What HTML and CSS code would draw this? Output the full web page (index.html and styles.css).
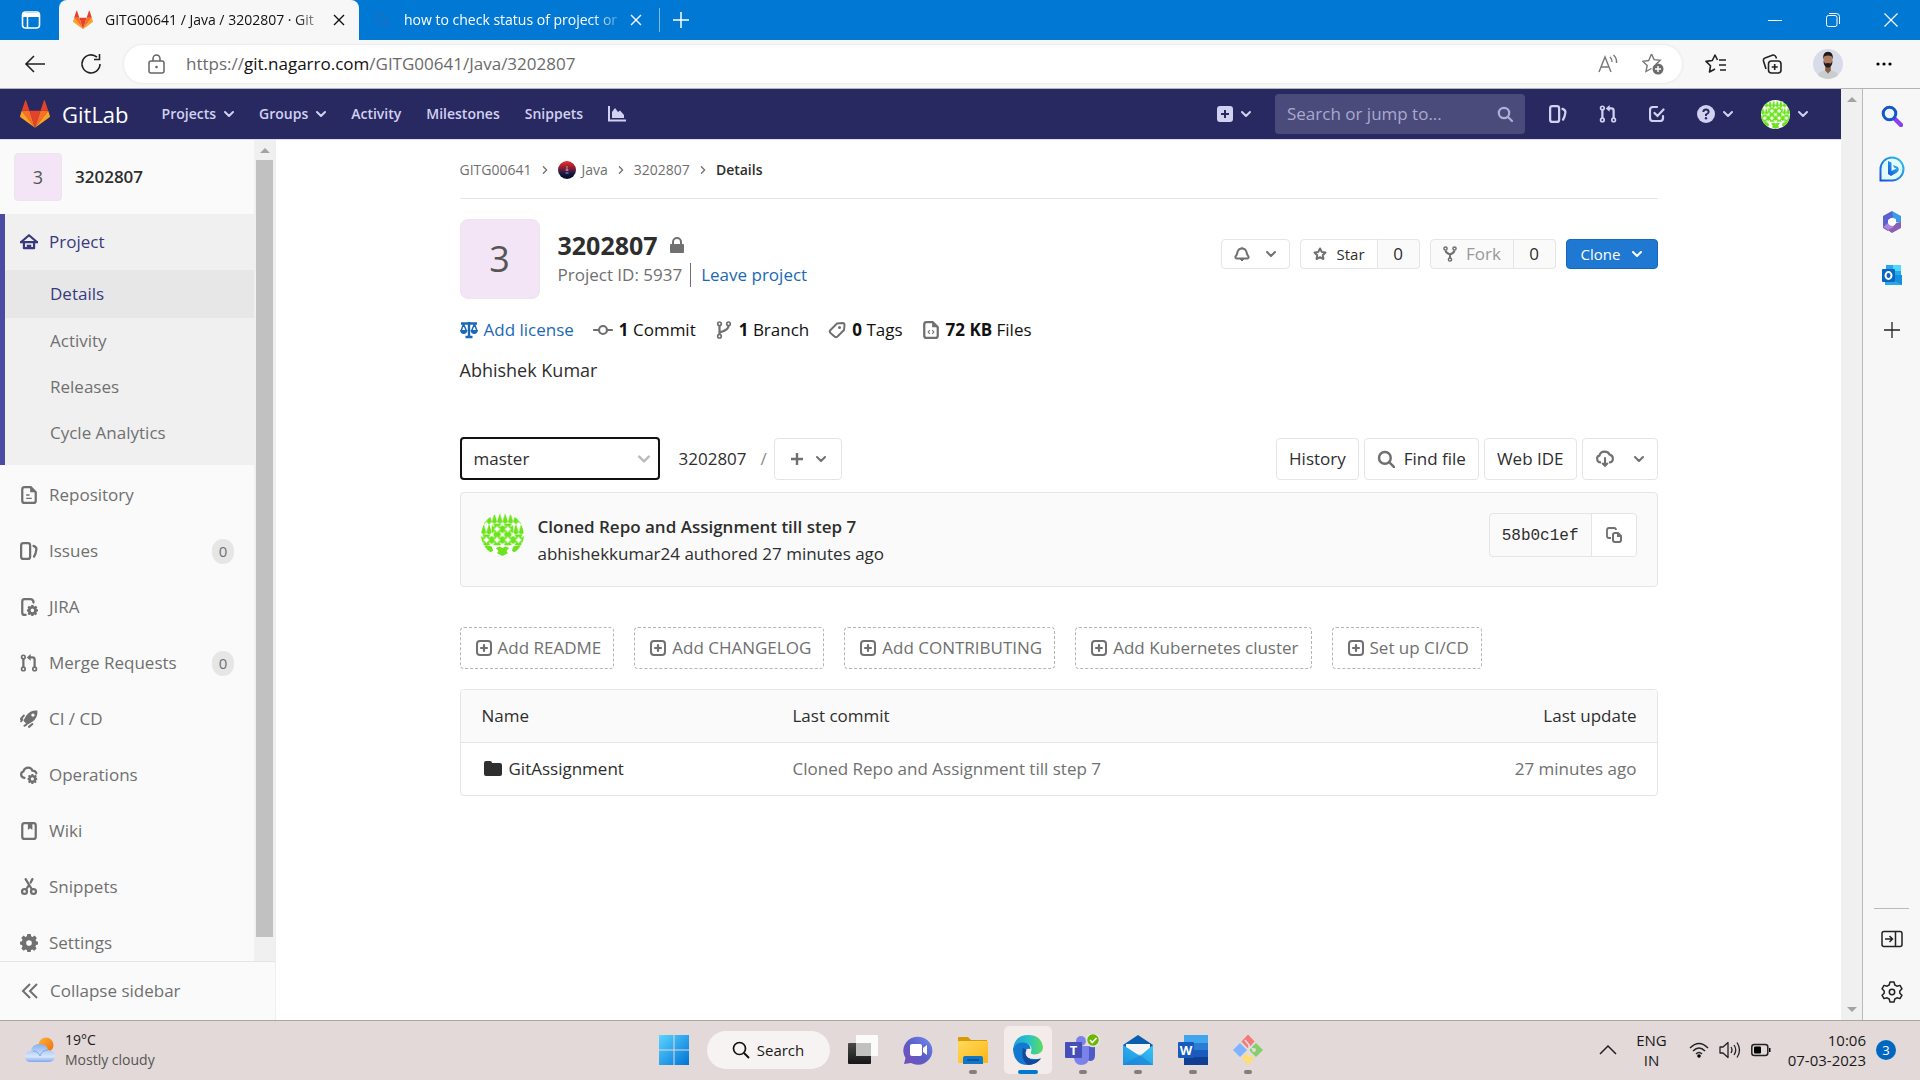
FILE: index.html
```html
<!DOCTYPE html>
<html lang="en">
<head>
<meta charset="utf-8">
<title>GITG00641 / Java / 3202807 · GitLab</title>
<link rel="stylesheet" href="styles.css">
</head>
<body>
<svg class="defs" aria-hidden="true">
  <defs>
    <linearGradient id="gWin" x1="0" y1="0" x2="1" y2="1"><stop offset="0" stop-color="#5bd5ff"/><stop offset="1" stop-color="#0072d6"/></linearGradient>
    <linearGradient id="gEdge" x1="0" y1="0" x2="1" y2="0"><stop offset="0" stop-color="#1d9fe0"/><stop offset=".5" stop-color="#27c2c9"/><stop offset="1" stop-color="#5fdc5a"/></linearGradient>
    <linearGradient id="gChat" x1="1" y1="0" x2="0" y2="1"><stop offset="0" stop-color="#6f8df0"/><stop offset=".5" stop-color="#5b5fc7"/><stop offset="1" stop-color="#7a4ab8"/></linearGradient>
    <linearGradient id="gFolder" x1="0" y1="0" x2="1" y2="1"><stop offset="0" stop-color="#ffd95c"/><stop offset="1" stop-color="#fcb614"/></linearGradient>
    <linearGradient id="gMail" x1="0" y1="1" x2="1" y2="0"><stop offset="0" stop-color="#1d8fe0"/><stop offset="1" stop-color="#37c5f5"/></linearGradient>
    <linearGradient id="gCloud" x1="0" y1="0" x2="0" y2="1"><stop offset="0" stop-color="#86b0ee"/><stop offset=".7" stop-color="#d7e6fb"/><stop offset="1" stop-color="#7fa6ee"/></linearGradient>
    <linearGradient id="gSun" x1="0" y1="0" x2="1" y2="1"><stop offset="0" stop-color="#fbb33a"/><stop offset="1" stop-color="#f26c0d"/></linearGradient>
    <linearGradient id="gBing" x1="0" y1="1" x2="1" y2="0"><stop offset="0" stop-color="#1b4fd8"/><stop offset="1" stop-color="#2fc4f0"/></linearGradient>
    <linearGradient id="gJava" x1="0" y1="0" x2="0" y2="1"><stop offset="0" stop-color="#e8302a"/><stop offset=".4" stop-color="#8a1c34"/><stop offset=".7" stop-color="#111a45"/><stop offset="1" stop-color="#05081e"/></linearGradient>
    <linearGradient id="gTask" x1="0" y1="0" x2="0" y2="1"><stop offset="0" stop-color="#4a4a4a"/><stop offset="1" stop-color="#161616"/></linearGradient>
    <clipPath id="round"><circle cx="16" cy="16" r="16"/></clipPath>
    <pattern id="tri" width="4" height="8" patternUnits="userSpaceOnUse"><path d="M2 0 4 6.500 2.500 8h-1L0 6.500z" fill="#6be41c"/></pattern>
    <pattern id="dia" width="8" height="8" patternUnits="userSpaceOnUse"><path d="M1 0h6L5.500 2.500 8 1v6L5.500 5.500 7 8H1l1.500-2.500L0 7V1l2.500 1.500z" fill="#6be41c"/><path d="m4 1.500 1 1.500 1.500 1L5 5 4 6.500 3 5 1.500 4 3 3z" fill="#fff"/></pattern>
  </defs>
  <symbol id="down" viewBox="0 0 10 10"><path d="m1 3 4 4 4-4" fill="none" stroke="currentColor" stroke-width="2" stroke-linecap="round" stroke-linejoin="round"/></symbol>
  <symbol id="right" viewBox="0 0 10 10"><path d="m3 1 4 4-4 4" fill="none" stroke="currentColor" stroke-width="1.600" stroke-linecap="round" stroke-linejoin="round"/></symbol>
  <symbol id="close" viewBox="0 0 12 12"><path d="m1 1 10 10M11 1 1 11" stroke="currentColor" stroke-width="1.400"/></symbol>
  <symbol id="tanuki" viewBox="0 0 36 33"><path fill="#e24329" d="M18 33 24.600 12.600H11.400z"/><path fill="#fc6d26" d="M18 33 11.400 12.600H2.100zM18 33l6.600-20.400h9.300z"/><path fill="#fca326" d="M2.100 12.600.1 18.800c-.2.600 0 1.200.5 1.500L18 33zM33.900 12.600l2 6.200c.2.600 0 1.200-.5 1.500L18 33z"/><path fill="#e24329" d="M2.100 12.600h9.300L7.400.5c-.2-.6-1.100-.6-1.300 0zM33.900 12.600h-9.300L28.600.5c.2-.6 1.100-.6 1.300 0z"/></symbol>
  <symbol id="ident" viewBox="0 0 32 32"><g clip-path="url(#round)"><path fill="#fff" d="M0 0h32v32H0z"/><path fill="url(#tri)" d="M0 0h32v8H0zM0 8h8v8H0zM24 8h8v8h-8z"/><path fill="url(#dia)" d="M8 8h16v16H8zM0 16h8v8H0zM24 16h8v8h-8z"/><path fill="#6be41c" d="m1 25 3-1 4 1 1 3-3 2zM31 25l-3-1-4 1-1 3 3 2zM11 26l3-1 2 1 2-1 3 1-2 2 1 2-4 2-4-2 1-2z"/></g></symbol>
  <symbol id="plusbox" viewBox="0 0 16 16"><rect x="1" y="1" width="14" height="14" rx="3" fill="none" stroke="currentColor" stroke-width="2"/><path d="M8 5v6M5 8h6" stroke="currentColor" stroke-width="2.200" stroke-linecap="round"/></symbol>
  <symbol id="mag" viewBox="0 0 16 16"><circle cx="7" cy="7" r="5.200" fill="none" stroke="currentColor" stroke-width="2.200"/><path d="m11 11 4 4" stroke="currentColor" stroke-width="2.200" stroke-linecap="round"/></symbol>
  <symbol id="issues" viewBox="0 0 16 16"><rect x="1" y="1" width="8" height="14" rx="2" fill="none" stroke="currentColor" stroke-width="2"/><path d="M12 3.500q3 1 2.500 3.500-.3 3-2 6" fill="none" stroke="currentColor" stroke-width="2" stroke-linecap="round"/></symbol>
  <symbol id="mr" viewBox="0 0 16 16"><g fill="none" stroke="currentColor" stroke-width="1.500"><circle cx="3" cy="2.700" r="1.600"/><circle cx="3" cy="13.300" r="1.600"/><circle cx="13" cy="13.300" r="1.600"/><path d="M3 4.500v7M13 11.500V5q0-2-2-2H8.500" stroke-width="2"/></g><path d="M9.500 0v6L6 3z" fill="currentColor"/></symbol>
  <symbol id="gear" viewBox="0 0 16 16"><path fill="currentColor" fill-rule="evenodd" d="M6.500 0h3l.4 2 1.300.6L13 1.400 15 3.500l-1.100 1.700.5 1.300 1.600.3v2.600l-1.700.4-.6 1.300 1 1.700-2 2-1.600-1.100-1.300.5L9.500 16h-3l-.4-1.800-1.300-.5-1.600 1.100-2-2 1-1.700-.5-1.300L0 9.400V6.800l1.700-.3.500-1.300L1.100 3.500l2-2.100 1.700 1.200L6.100 2zM8 5.500a2.500 2.500 0 1 0 0 5 2.500 2.500 0 0 0 0-5z"/></symbol>
  <symbol id="file" viewBox="0 0 16 16"><path d="M9.500 1H4q-2 0-2 2v10q0 2 2 2h8q2 0 2-2V5.500z" fill="none" stroke="currentColor" stroke-width="2" stroke-linejoin="round"/><path d="M9 1v4.500h5" fill="currentColor"/><path d="M5.500 8h3M5.500 11h5" stroke="currentColor" stroke-width="1.200"/></symbol>
  <symbol id="cloudgear" viewBox="0 0 16 16"><path d="M4 10.500Q1 10 1 7.500q0-2 2-2.700Q4 1.500 7.500 1.500 10 1.500 11 4q3 0 3.500 2.500" fill="none" stroke="currentColor" stroke-width="2" stroke-linecap="round"/><use href="#gear" x="6.500" y="7" width="9" height="9"/></symbol>
  <symbol id="filegear" viewBox="0 0 16 16"><path d="M5 15H4q-2 0-2-2V3q0-2 2-2h5q3 0 3 3" fill="none" stroke="currentColor" stroke-width="2" stroke-linecap="round"/><use href="#gear" x="6" y="6" width="10" height="10"/></symbol>
  <symbol id="house" viewBox="0 0 16 16"><path d="M1 8 8 2l7 6" fill="none" stroke="currentColor" stroke-width="2" stroke-linecap="round" stroke-linejoin="round"/><path d="M3.500 8v5.500h9V8M0 8h16M6 11.500h4" fill="none" stroke="currentColor" stroke-width="2" stroke-linejoin="round"/></symbol>
  <symbol id="rocket" viewBox="0 0 16 16"><path fill="currentColor" fill-rule="evenodd" d="M15.500.5Q9 0 5.500 5L3 9.500 6.500 13 11 10.500Q16 7 15.500.5zM11.500 3a1.500 1.500 0 1 1 0 3 1.500 1.500 0 0 1 0-3z"/><path d="m.8 8 2.500-3M1 10l1-1.500M8 15l3-2.500M4 14l1.500-1" stroke="currentColor" stroke-width="1.800" stroke-linecap="round"/></symbol>
  <symbol id="wiki" viewBox="0 0 16 16"><rect x="2" y="1" width="12" height="14" rx="2" fill="none" stroke="currentColor" stroke-width="2"/><path d="M7 1h4v6L9 5.500 7 7z" fill="currentColor"/></symbol>
  <symbol id="scissors" viewBox="0 0 16 16"><g fill="none" stroke="currentColor" stroke-width="2"><circle cx="4" cy="12" r="2.200"/><circle cx="12" cy="12" r="2.200"/><path d="m5 1 5.500 9M11 1 9.500 4M7.500 7 5.500 10" stroke-linecap="round"/></g></symbol>
  <symbol id="fork" viewBox="0 0 16 16"><g fill="none" stroke="currentColor" stroke-width="1.500"><circle cx="3.500" cy="2.500" r="1.600"/><circle cx="12.500" cy="2.500" r="1.600"/><circle cx="8" cy="13.500" r="1.600"/><path d="M3.500 4.500Q4 7 8 8.500 12 7 12.500 4.500M8 8v4" stroke-width="2"/></g></symbol>
  <symbol id="branch" viewBox="0 0 16 16"><g fill="none" stroke="currentColor" stroke-width="1.500"><circle cx="4" cy="2.500" r="1.600"/><circle cx="12" cy="2.500" r="1.600"/><circle cx="4" cy="13.500" r="1.600"/><path d="M4 4.500v7M12 4.500Q12 8 4.500 10" stroke-width="2"/></g></symbol>
</svg>

<div class="tabs">
  <button class="iconbtn workspace" aria-label="Tab actions"><svg width="20" height="20" viewBox="0 0 20 20"><rect x="1.500" y="2" width="17" height="16" rx="3" fill="none" stroke="#fff" stroke-width="1.600"/><path d="M2 3h16v4H2z" fill="#fff"/><path d="M6.500 7v11" stroke="#fff" stroke-width="1.500"/></svg></button>
  <div class="tab active"><svg width="20" height="20"><use href="#tanuki"/></svg><span class="tabtext">GITG00641 / Java / 3202807 · Git</span><button class="x" aria-label="Close tab"><svg width="12" height="12"><use href="#close"/></svg></button></div>
  <div class="tab other"><svg width="14" height="14" color="#1a6fc4"><use href="#mag"/></svg><span class="tabtext">how to check status of project or</span><button class="x" aria-label="Close tab"><svg width="12" height="12"><use href="#close"/></svg></button></div>
  <button class="x newtab" aria-label="New tab"><svg width="18" height="18" viewBox="0 0 18 18"><path d="M9 1v16M1 9h16" stroke="#fff" stroke-width="1.500"/></svg></button>
  <div class="winctl">
    <button aria-label="Minimize"><svg width="14" height="14" viewBox="0 0 14 14"><path d="M0 7.500h14" stroke="#fff"/></svg></button>
    <button aria-label="Restore"><svg width="14" height="14" viewBox="0 0 14 14"><rect x=".5" y="2.500" width="10.500" height="11" rx="2" fill="none" stroke="#fff"/><path d="M3 .5h7.500q3 0 3 3V11" fill="none" stroke="#fff"/></svg></button>
    <button aria-label="Close"><svg width="14" height="14" viewBox="0 0 14 14"><path d="m.5.5 13 13M13.500.5l-13 13" stroke="#fff" stroke-width="1.200"/></svg></button>
  </div>
</div>

<div class="toolbar">
  <button class="iconbtn" aria-label="Back"><svg width="22" height="20" viewBox="0 0 22 20"><path d="M21 10H2M10 2 2 10l8 8" fill="none" stroke="#222" stroke-width="1.600"/></svg></button>
  <button class="iconbtn" aria-label="Refresh"><svg width="22" height="22" viewBox="0 0 22 22"><path d="M20 11a9 9 0 1 1-3-6.800M19.500 1v5.500H14" fill="none" stroke="#222" stroke-width="1.600"/></svg></button>
  <div class="address">
    <svg width="17" height="20" viewBox="0 0 17 20"><rect x="1" y="7" width="15" height="12" rx="2" fill="none" stroke="#666" stroke-width="1.500"/><path d="M5 7V4.500a3.500 3.500 0 0 1 7 0V7" fill="none" stroke="#666" stroke-width="1.500"/><circle cx="8.500" cy="13" r="1.300" fill="#666"/></svg>
    <span class="url">https://<b>git.nagarro.com</b>/GITG00641/Java/3202807</span>
    <svg width="20" height="20" viewBox="0 0 20 20"><path d="M1 18 7 3l6 15M3 13h8M12 3q2 2 2 5M15.500 1Q19 4 18.500 9" fill="none" stroke="#777" stroke-width="1.400"/></svg>
    <svg width="22" height="22" viewBox="0 0 22 22"><path d="m9.500 1 2.600 5.600 6.100.7-4.500 4.200M9.500 15.500 4 18.500l1.200-6-4.500-4.200 6-.8L9.500 1" fill="none" stroke="#777" stroke-width="1.400"/><circle cx="16" cy="16" r="5.500" fill="#6c6c6c"/><path d="M16 13v6M13 16h6" stroke="#fff" stroke-width="1.400"/></svg>
  </div>
  <button class="iconbtn" aria-label="Favorites"><svg width="22" height="20" viewBox="0 0 22 20"><path d="M14 6h7M14 11h7M15 16h6" stroke="#222" stroke-width="1.600"/><path d="M12.500 6 10 1 7.300 6.500 1 7.400l4.500 4.400L4.500 18l5.500-3" fill="none" stroke="#222" stroke-width="1.600" stroke-linejoin="round"/></svg></button>
  <button class="iconbtn" aria-label="Collections"><svg width="20" height="20" viewBox="0 0 20 20"><rect x="6.500" y="7" width="12.500" height="12" rx="3" fill="none" stroke="#222" stroke-width="1.600"/><path d="M12.700 10v6M9.700 13h6M4 15 1.500 7Q1 4.500 3 4l8-3q2-.3 3 2l.5 1.500" fill="none" stroke="#222" stroke-width="1.600"/></svg></button>
  <button class="iconbtn profile" aria-label="Profile"><svg width="30" height="30" viewBox="0 0 32 32"><g clip-path="url(#round)"><path fill="#d8dbe8" d="M0 0h32v32H0z"/><path fill="#c9cdcb" d="M4 32q1-8 8-9h8q7 1 8 9z"/><path fill="#8a5a42" d="M13 17h6v6l-3 3-3-3z"/><ellipse cx="16" cy="12" rx="4.800" ry="7" fill="#b07c62"/><path fill="#231c1c" d="M11 11Q10 3 16 3t5 8l-1-3Q16 6 12 8zM11.200 13q.3 6 4.800 7 4.500-1 4.800-7l-1.800 2.500q-3-1-6 0z"/></g></svg></button>
  <button class="iconbtn" aria-label="Settings and more"><svg width="18" height="6" viewBox="0 0 18 6"><circle cx="3" cy="3" r="1.600"/><circle cx="9" cy="3" r="1.600"/><circle cx="15" cy="3" r="1.600"/></svg></button>
</div>

<div class="window">
<div class="page">
  <header class="nav">
    <a class="brand" href="#"><svg width="30" height="28"><use href="#tanuki"/></svg><span>GitLab</span></a>
    <nav class="links">
      <a href="#">Projects <svg width="10" height="10"><use href="#down"/></svg></a>
      <a href="#">Groups <svg width="10" height="10"><use href="#down"/></svg></a>
      <a href="#">Activity</a><a href="#">Milestones</a><a href="#">Snippets</a>
      <a href="#" aria-label="Analytics"><svg width="18" height="16" viewBox="0 0 18 16"><path d="M1 0v14.500h17" fill="none" stroke="currentColor" stroke-width="2"/><path d="M4 12V6l3-4 3 4 2-1.500 4 4.500v3z" fill="currentColor"/></svg></a>
    </nav>
    <div class="navright">
      <a href="#" aria-label="New"><svg width="16" height="16" viewBox="0 0 16 16"><path fill="currentColor" fill-rule="evenodd" d="M3 0h10q3 0 3 3v10q0 3-3 3H3q-3 0-3-3V3q0-3 3-3zm4 4v3H4v2h3v3h2V9h3V7H9V4z"/></svg><svg width="10" height="10"><use href="#down"/></svg></a>
      <label class="search"><input type="text" placeholder="Search or jump to..." aria-label="Search or jump to"><svg width="16" height="16"><use href="#mag"/></svg></label>
      <a href="#" aria-label="Issues"><svg width="18" height="18"><use href="#issues"/></svg></a>
      <a href="#" aria-label="Merge requests"><svg width="18" height="18"><use href="#mr"/></svg></a>
      <a href="#" aria-label="Todos"><svg width="16" height="16" viewBox="0 0 16 16"><path d="M8 1H4Q1 1 1 4v8q0 3 3 3h7q3 0 3-3v-2M5.500 7l3 3 6-6.500" fill="none" stroke="currentColor" stroke-width="2.200" stroke-linecap="round"/></svg></a>
      <a class="help" href="#" aria-label="Help"><svg width="18" height="18" viewBox="0 0 18 18"><circle cx="9" cy="9" r="9" fill="currentColor"/><path d="M6.300 7Q6.500 4.500 9 4.500T11.700 7Q11.700 8.300 9 9.500V11" fill="none" stroke="#292961" stroke-width="1.900"/><circle cx="9" cy="13.300" r="1.200" fill="#292961"/></svg><svg width="10" height="10"><use href="#down"/></svg></a>
      <a class="user" href="#" aria-label="User menu"><svg width="29" height="29"><use href="#ident"/></svg><svg width="10" height="10"><use href="#down"/></svg></a>
    </div>
  </header>
  <div class="body">
    <aside class="side">
      <div class="scroller">
        <div class="menu">
          <a class="context" href="#"><span class="avatar small">3</span><strong>3202807</strong></a>
          <div class="section">
            <a class="item" href="#"><svg width="18" height="18"><use href="#house"/></svg>Project</a>
            <a class="sub on" href="#">Details</a><a class="sub" href="#">Activity</a><a class="sub" href="#">Releases</a><a class="sub" href="#">Cycle Analytics</a>
          </div>
          <a class="item" href="#"><svg width="18" height="18"><use href="#file"/></svg>Repository</a>
          <a class="item" href="#"><svg width="18" height="18"><use href="#issues"/></svg>Issues<span class="count">0</span></a>
          <a class="item" href="#"><svg width="18" height="18"><use href="#filegear"/></svg>JIRA</a>
          <a class="item" href="#"><svg width="18" height="18"><use href="#mr"/></svg>Merge Requests<span class="count">0</span></a>
          <a class="item" href="#"><svg width="18" height="18"><use href="#rocket"/></svg>CI / CD</a>
          <a class="item" href="#"><svg width="18" height="18"><use href="#cloudgear"/></svg>Operations</a>
          <a class="item" href="#"><svg width="18" height="18"><use href="#wiki"/></svg>Wiki</a>
          <a class="item" href="#"><svg width="18" height="18"><use href="#scissors"/></svg>Snippets</a>
          <a class="item" href="#"><svg width="18" height="18"><use href="#gear"/></svg>Settings</a>
        </div>
        <div class="bar"><i class="up"></i><i class="thumb"></i></div>
      </div>
      <button class="collapse"><svg width="18" height="18" viewBox="0 0 18 18"><path d="M9 2 2 9l7 7M16 2 9 9l7 7" fill="none" stroke="currentColor" stroke-width="2"/></svg>Collapse sidebar</button>
    </aside>
    <main>
      <div class="content">
        <nav class="crumbs"><a href="#">GITG00641</a><svg width="8" height="8"><use href="#right"/></svg><a href="#"><svg width="18" height="18" viewBox="0 0 18 18"><circle cx="9" cy="9" r="9" fill="url(#gJava)"/><path d="M7.500 12h3M9 5v5M7.500 9h3" stroke="#c9b6cf" stroke-width=".8"/></svg>Java</a><svg width="8" height="8"><use href="#right"/></svg><a href="#">3202807</a><svg width="8" height="8"><use href="#right"/></svg><strong>Details</strong></nav>
        <div class="home">
          <span class="avatar big">3</span>
          <div class="titles">
            <h1>3202807 <svg width="14" height="16" viewBox="0 0 14 16"><rect y="7" width="14" height="9" rx="1" fill="#707070"/><path d="M3 8V5a4 4 0 0 1 8 0v3" fill="none" stroke="#707070" stroke-width="2"/></svg></h1>
            <p><span class="pid">Project ID: 5937</span><a href="#">Leave project</a></p>
          </div>
          <div class="actions">
            <button class="btn bell" aria-label="Notifications"><svg width="16" height="16" viewBox="0 0 16 16"><path d="M8 2.500q3.500 0 4.500 3.500.5 3 2 4.500.5 2-1.500 2H3q-2 0-1.500-2Q3 9 3.500 6 4.500 2.500 8 2.500z" fill="none" stroke="currentColor" stroke-width="2" stroke-linejoin="round"/><path d="M8 .8v2M6 13h4l-2 2z" fill="currentColor" stroke="currentColor"/></svg><svg width="10" height="10"><use href="#down"/></svg></button>
            <div class="pair"><button class="btn"><svg width="16" height="16" viewBox="0 0 16 16"><path d="m8 2.500 1.700 3.400 3.800.6-2.700 2.700.6 3.800L8 11.200 4.600 13l.6-3.800L2.500 6.500l3.800-.6z" fill="none" stroke="currentColor" stroke-width="2" stroke-linejoin="round"/></svg>Star</button><a class="num" href="#">0</a></div>
            <div class="pair off"><button class="btn" disabled><svg width="16" height="16"><use href="#fork"/></svg>Fork</button><a class="num" href="#">0</a></div>
            <button class="btn clone">Clone<svg width="10" height="10"><use href="#down"/></svg></button>
          </div>
        </div>
        <div class="stats">
          <a class="blue" href="#"><svg width="18" height="18" viewBox="0 0 18 18"><path d="M1 2.500h16M9 1v14M5.500 16h7" stroke="currentColor" stroke-width="2.400"/><path d="M3.500 3 1 10M3.500 3 6.500 10M14.500 3l-3 7M14.500 3 17 10" stroke="currentColor" stroke-width="1.500"/><path d="M0 9h7.500q-.5 4-3.800 4T0 9zM10.500 9H18q-.5 4-3.800 4t-3.700-4z" fill="currentColor"/></svg>Add license</a>
          <a href="#"><svg width="20" height="18" viewBox="0 0 20 18"><circle cx="10" cy="9" r="4" fill="none" stroke="currentColor" stroke-width="2.200"/><path d="M1 9h5M14 9h5" stroke="currentColor" stroke-width="2.200" stroke-linecap="round"/></svg><span><b>1</b> Commit</span></a>
          <a href="#"><svg width="18" height="18"><use href="#branch"/></svg><span><b>1</b> Branch</span></a>
          <a href="#"><svg width="18" height="18" viewBox="0 0 18 18"><path d="m9 2.500 5.500-.5q2 0 2 2l-.5 5-6.500 6.500q-1.500 1.300-3 0L2.500 12q-1.500-1.500 0-3z" fill="none" stroke="currentColor" stroke-width="2"/><circle cx="11.500" cy="6.500" r="1.500" fill="currentColor"/></svg><span><b>0</b> Tags</span></a>
          <a href="#"><svg width="18" height="18" viewBox="0 0 16 16"><path d="M9.500 1H4q-2 0-2 2v10q0 2 2 2h8q2 0 2-2V5.500z" fill="none" stroke="currentColor" stroke-width="2"/><path d="M9 1v4.500h5" fill="currentColor"/><path d="M7 8 5.500 9.800 7 11.500M9 8l1.500 1.800L9 11.500" fill="none" stroke="currentColor"/></svg><span><b>72 KB</b> Files</span></a>
        </div>
        <p class="desc">Abhishek Kumar</p>
        <div class="refs">
          <label class="ref"><select aria-label="Branch"><option>master</option></select><svg width="12" height="12"><use href="#down"/></svg></label>
          <a class="path" href="#">3202807</a><span class="slash">/</span>
          <button class="btn tall add" aria-label="Add to tree"><svg width="14" height="14" viewBox="0 0 14 14"><path d="M7 1v12M1 7h12" stroke="currentColor" stroke-width="2.400"/></svg><svg width="10" height="10"><use href="#down"/></svg></button>
          <div class="tree">
            <button class="btn tall">History</button>
            <button class="btn tall find"><svg width="18" height="18"><use href="#mag"/></svg>Find file</button>
            <button class="btn tall">Web IDE</button>
            <button class="btn tall dl" aria-label="Download"><svg width="18" height="18" viewBox="0 0 16 16"><path d="M4.500 11Q1 11 1 7.500 1 5.500 3 5q1-3.500 4.500-3.500T12 4q3 .8 3 3.700Q15 11 11.500 11M8 6.500V14M5.500 11.500 8 14l2.500-2.500" fill="none" stroke="currentColor" stroke-width="1.900"/></svg><svg width="10" height="10"><use href="#down"/></svg></button>
          </div>
        </div>
        <div class="commit">
          <svg width="43" height="43"><use href="#ident"/></svg>
          <div class="ctext"><a href="#"><strong>Cloned Repo and Assignment till step 7</strong></a><span>abhishekkumar24 authored 27 minutes ago</span></div>
          <div class="sha"><span>58b0c1ef</span><button aria-label="Copy commit SHA"><svg width="16" height="16" viewBox="0 0 16 16"><path d="M5 11H3q-2 0-2-2V3q0-2 2-2h5q2 0 2 2" fill="none" stroke="currentColor" stroke-width="1.800"/><path d="M12 6H9Q7 6 7 8v5q0 2 2 2h4q2 0 2-2V9z" fill="none" stroke="currentColor" stroke-width="2"/><path d="M11 6v4h4" fill="currentColor"/></svg></button></div>
        </div>
        <div class="suggest">
          <a href="#"><svg width="16" height="16"><use href="#plusbox"/></svg>Add README</a>
          <a href="#"><svg width="16" height="16"><use href="#plusbox"/></svg>Add CHANGELOG</a>
          <a href="#"><svg width="16" height="16"><use href="#plusbox"/></svg>Add CONTRIBUTING</a>
          <a href="#"><svg width="16" height="16"><use href="#plusbox"/></svg>Add Kubernetes cluster</a>
          <a href="#"><svg width="16" height="16"><use href="#plusbox"/></svg>Set up CI/CD</a>
        </div>
        <div class="files">
          <table>
            <thead><tr><th class="name">Name</th><th>Last commit</th><th class="end">Last update</th></tr></thead>
            <tbody><tr><td><a class="folder" href="#"><svg width="18" height="16" viewBox="0 0 18 16"><path d="M0 2Q0 0 2 0h4q2 0 2 2h8q2 0 2 2v9q0 2-2 2H2q-2 0-2-2z" fill="#2e2e2e"/></svg>GitAssignment</a></td><td class="dim">Cloned Repo and Assignment till step 7</td><td class="dim end">27 minutes ago</td></tr></tbody>
          </table>
        </div>
      </div>
    </main>
  </div>
</div>
<div class="bar"><i class="up"></i><i class="dn"></i></div>
<aside class="edge">
  <button aria-label="Search"><svg width="22" height="22" viewBox="0 0 22 22"><path d="m14 14 6 6" stroke="#8a3ff0" stroke-width="4.500" stroke-linecap="round"/><circle cx="8.500" cy="8.500" r="6.300" fill="#eef6ff" stroke="#1456cc" stroke-width="3"/></svg></button>
  <button aria-label="Bing"><svg width="26" height="26" viewBox="0 0 26 26"><path d="M1.500 24.500V13A11.500 11.500 0 1 1 13 24.500z" fill="#e2fbff" stroke="url(#gBing)" stroke-width="2"/><path d="m9 5 3.500 1.500V15l5-2.500-2.500-1L14 9l5 2q2 3-1 5.500L12 20l-3-2z" fill="url(#gBing)"/></svg></button>
  <button aria-label="Microsoft 365"><svg width="22" height="24" viewBox="0 0 22 24"><path d="m11 1 9 5v7l-5-1V9L8 7z" fill="#3b9be8"/><path d="M11 1 2 6v12l5 3V10l5-3z" fill="#5b62cf"/><path d="m2 17 9 6 9-5V12l-5 1-5 5z" fill="#8a5fb4"/><path d="m2 17 5 3 6-3-6-4z" fill="#b184dd"/><circle cx="11" cy="12" r="3.800" fill="#fff"/></svg></button>
  <button aria-label="Outlook"><svg width="22" height="22" viewBox="0 0 22 22"><rect x="5" y="1" width="15" height="13" fill="#28a8ea"/><path d="M12 1h8v6h-8z" fill="#50d9ff"/><path d="M4 11h17v10H4z" fill="#1490df"/><path d="m4 11 17 10H4z" fill="#28a8ea"/><rect x="1" y="5" width="13" height="13" rx="1" fill="#0a64c4"/><ellipse cx="7.500" cy="11.500" rx="3" ry="3.400" fill="none" stroke="#fff" stroke-width="2"/></svg></button>
  <button class="more" aria-label="Add"><svg width="16" height="16" viewBox="0 0 16 16"><path d="M8 0v16M0 8h16" stroke="#222" stroke-width="1.300"/></svg></button>
  <hr>
  <button aria-label="Hide sidebar"><svg width="22" height="18" viewBox="0 0 22 18"><rect x="1" y="1.500" width="20" height="15" rx="2" fill="none" stroke="#222" stroke-width="1.500"/><path d="M14.500 2v14M4 9h7M8.500 6l3 3-3 3" fill="none" stroke="#222" stroke-width="1.500"/></svg></button>
  <button aria-label="Settings"><svg width="22" height="22" viewBox="0 0 22 22"><path d="M9 1h4l.8 3 2.200 1.200 3-.8 2 3.400L18.800 10v2.200l2.200 2-2 3.400-3-.8-2.200 1.200L13 21H9l-.8-3L6 16.800l-3 .8-2-3.400 2.200-2V10L1 7.800l2-3.400 3 .8L8.200 4z" fill="none" stroke="#222" stroke-width="1.500" stroke-linejoin="round"/><circle cx="11" cy="11" r="2.700" fill="none" stroke="#222" stroke-width="1.500"/></svg></button>
</aside>
</div>

<footer class="taskbar">
  <div class="weather"><svg width="30" height="26" viewBox="0 0 30 26"><circle cx="21" cy="8" r="7.500" fill="url(#gSun)"/><path d="M6 25q-6 0-6-5.500Q0 14 6 14q1-7 8.500-7t8.500 6q7 .5 7 6t-6 6z" fill="url(#gCloud)"/><path d="M8 14q5 0 7 5 2-6 8-6" fill="none" stroke="#5e86da" stroke-opacity=".6"/></svg><div><div>19°C</div><div class="soft">Mostly cloudy</div></div></div>
  <div class="apps">
    <button aria-label="Start"><svg width="30" height="30" viewBox="0 0 30 30"><path d="M0 0h14.500v14.500H0zM15.500 0H30v14.500H15.500zM0 15.500h14.500V30H0zM15.500 15.500H30V30H15.500z" fill="url(#gWin)"/></svg></button>
    <button class="tsearch"><svg width="18" height="18" viewBox="0 0 18 18"><circle cx="7.500" cy="7.500" r="6" fill="none" stroke="#111" stroke-width="1.700"/><path d="m12 12 5 5" stroke="#111" stroke-width="2"/></svg>Search</button>
    <button aria-label="Task view"><svg width="30" height="30" viewBox="0 0 30 30"><rect y="8" width="23" height="21" rx="1" fill="url(#gTask)"/><rect x="8" width="22" height="21" rx="1" fill="#fbfbfb"/><path d="M8 8h15v13H8z" fill="#c3c1c0"/></svg></button>
    <button aria-label="Chat"><svg width="30" height="30" viewBox="0 0 30 30"><path d="M1 29 2.500 23A14.500 14 0 1 1 8 28z" fill="url(#gChat)"/><rect x="7" y="9" width="12" height="12" rx="2" fill="#fff"/><path d="m20 13 4-3v10l-4-3z" fill="#fff"/></svg></button>
    <button class="run" aria-label="File Explorer"><svg width="32" height="28" viewBox="0 0 32 28"><path d="M1 2q0-1 1-1h9l3 3h16v10H1z" fill="#d99a08"/><rect x="1" y="5" width="30" height="22" rx="1" fill="url(#gFolder)"/><path d="M6 28v-6q0-2 2-2h16q2 0 2 2v6z" fill="#0f76c8"/><path d="M10 24h12" stroke="#0a4a86" stroke-width="1.500"/></svg></button>
    <button class="run now" aria-label="Microsoft Edge"><svg width="30" height="30" viewBox="0 0 30 30"><path d="M0 15Q1 0 15.500 0 28 0 30 12q0 7-8 7.500-5-.3-4-2.500 2-6-4-8Q6 8 0 15z" fill="url(#gEdge)"/><path d="M0 14Q3 7 10 7.500 17 8 17.500 14 12 13 12 18q1 8 16 5.500Q23 30 15 30 1 30 0 14z" fill="#1279cf"/><path d="M10 13Q7 24 15 30q8 0 13-6.500-8 3-13-.5-4-4-1.500-8z" fill="#114a9c"/></svg></button>
    <button class="run" aria-label="Microsoft Teams"><svg width="36" height="32" viewBox="0 0 36 32"><circle cx="16" cy="7" r="5" fill="#7b83eb"/><path d="M19 12h11v9q0 6-5 6-3 0-6-3z" fill="#5059c9"/><path d="M9 12h15v11q0 8-8 8-6 0-7-7z" fill="#7b83eb"/><rect y="8" width="17" height="16" rx="1" fill="#464eb8"/><text x="8.500" y="21" class="glyph" text-anchor="middle">T</text><circle cx="28" cy="6" r="6.500" fill="#6bb700" stroke="#e6e6e6" stroke-width="1.500"/><path d="m25 6 2.300 2.500L31.500 4" fill="none" stroke="#fff" stroke-width="1.700"/></svg></button>
    <button class="run" aria-label="Mail"><svg width="30" height="30" viewBox="0 0 30 30"><path d="M0 10 15 0l15 10v3H0z" fill="#0b5eae"/><path d="M3 9h24v10H3z" fill="#f5f5f5"/><path d="m0 10 17 11 13-11v20H0z" fill="url(#gMail)"/><path d="m0 30 17-10 13 10z" fill="#1b82dc" opacity=".6"/></svg></button>
    <button class="run" aria-label="Word"><svg width="30" height="30" viewBox="0 0 30 30"><path d="M6 0h24v8H6z" fill="#41a5ee"/><path d="M6 8h24v7H6z" fill="#2b7cd3"/><path d="M6 15h24v7H6z" fill="#185abd"/><path d="M6 22h24v8H6z" fill="#103f91"/><rect y="7" width="16" height="16" rx="1" fill="#185abd"/><text x="8" y="20" class="glyph" text-anchor="middle">W</text></svg></button>
    <button class="run" aria-label="Git"><svg width="30" height="30" viewBox="0 0 30 30"><path d="m15 0 6 6.500-6 6.500-6-6.500z" fill="#f47b7b" stroke="#f47b7b" stroke-linejoin="round"/><path d="m7 8 7 7-7 7-7-7z" fill="#80b3ff"/><path d="m23 8 7 7-7 7-7-7z" fill="#85cf6b"/><path d="m15 17 6 6-6 7-6-7z" fill="#ffdd70"/><path d="m12 5 4 5v10M16 11l5 4" fill="none" stroke="#e6dcdc" stroke-width="1.600"/><circle cx="16" cy="20" r="2" fill="#e6dcdc"/><circle cx="21" cy="15" r="2" fill="#e6dcdc"/></svg></button>
  </div>
  <div class="tray">
    <button class="show" aria-label="Show hidden icons"><svg width="18" height="10" viewBox="0 0 18 10"><path d="m1 9 8-8 8 8" fill="none" stroke="#222" stroke-width="1.500"/></svg></button>
    <div class="lang">ENG<br>IN</div>
    <div class="status">
      <svg width="20" height="16" viewBox="0 0 20 16"><path d="M1 6q9-9 18 0M4 9q6-6 12 0M7 12q3-3 6 0" fill="none" stroke="#222" stroke-width="1.500"/><circle cx="10" cy="14" r="1.800"/></svg>
      <svg width="22" height="18" viewBox="0 0 22 18"><path d="M1 6h3l5-4.500v15L4 12H1z" fill="none" stroke="#222" stroke-width="1.300" stroke-linejoin="round"/><path d="M12 6q2 3 0 6M15 4q3.500 5 0 10M18 1.500q5 7.500 0 15" fill="none" stroke="#222" stroke-width="1.300"/></svg>
      <svg width="20" height="14" viewBox="0 0 20 14"><rect x=".8" y="1.500" width="16" height="11" rx="2.500" fill="none" stroke="#222" stroke-width="1.500"/><rect x="3" y="3.500" width="7" height="7" rx="1"/><path d="M18 5h1.500v4H18z"/></svg>
    </div>
    <div class="clock">10:06<br>07-03-2023</div>
    <span class="badge">3</span>
  </div>
</footer>
</body>
</html>
```
FILE: styles.css
```css
* { box-sizing: border-box; }
html, body { height: 100%; }
body {
  margin: 0;
  display: flex;
  flex-direction: column;
  overflow: hidden;
  font: 17px/24px "Open Sans", "Noto Sans", sans-serif;
  color: #2e2e2e;
  background: #fff;
}
a { color: inherit; text-decoration: none; }
button { font: inherit; color: inherit; border: 0; background: none; padding: 0; }
p, h1 { margin: 0; }
svg { flex: none; display: block; }
.defs { position: absolute; width: 0; height: 0; }
.iconbtn { width: 46px; height: 40px; display: flex; align-items: center; justify-content: center; }

/* browser tabs */
.tabs { height: 40px; flex: none; display: flex; align-items: stretch; background: #0078d4; color: #fff; font-size: 14px; }
.workspace { width: 59px; padding-left: 2px; }
.tab { display: flex; align-items: center; gap: 12px; width: 300px; padding: 0 14px; }
.tab.active { background: #f7f7f7; color: #111; border-radius: 8px 8px 0 0; }
.tab.other { padding-left: 16px; gap: 12px; }
.tab.other svg:first-child { margin-right: 3px; }
.tabtext { flex: 1; white-space: nowrap; mask-image: linear-gradient(90deg, #000 88%, #0004); }
.x { display: flex; align-items: center; }
.newtab { height: 24px; align-self: center; padding-left: 12px; border-left: 1px solid #7dbbea; }
.winctl { margin-left: auto; display: flex; }
.winctl button { width: 58px; display: flex; align-items: center; justify-content: center; }

/* address bar */
.toolbar { height: 49px; flex: none; display: flex; align-items: center; padding: 0 8px 0 12px; background: #f7f7f7; border-bottom: 1px solid #b4b4b4; }
.toolbar .iconbtn { width: 56px; }
.toolbar .iconbtn:first-child { width: 46px; }
.toolbar .iconbtn:nth-child(2) { width: 66px; }
.address { flex: 1; height: 38px; display: flex; align-items: center; gap: 24px; padding: 0 18px 0 24px; margin-right: 6px; border-radius: 19px; background: #fff; box-shadow: 0 0 3px #ddd; }
.url { flex: 1; color: #6b6b6b; margin-left: -3px; }
.url b { color: #111; font-weight: 400; }

.window { flex: 1; min-height: 0; display: flex; border-bottom: 1px solid #aaa6a6; }
.page { flex: 1; min-width: 0; display: flex; flex-direction: column; }

/* scroll bars */
.bar { width: 21px; flex: none; background: #f0f0f0; display: flex; flex-direction: column; align-items: center; padding: 8px 0; }
.bar .up { border: 5px solid transparent; border-top: 0; border-bottom-color: #a3a3a3; }
.bar .dn { border: 5px solid transparent; border-bottom: 0; border-top-color: #a3a3a3; margin-top: auto; }
.bar .thumb { flex: 1; width: 17px; background: #c1c1c1; margin: 7px 0 16px; }

/* top navigation */
.nav { height: 51px; flex: none; display: flex; align-items: center; padding: 0 33px 0 20px; background: #292961; border-bottom: 1px solid #dcdcf0; color: #d1d1f0; font-size: 14px; font-weight: 600; }
.brand { display: flex; align-items: center; gap: 12px; color: #fff; font-size: 22px; font-weight: 400; }
.links { display: flex; align-items: center; gap: 25px; margin-left: 33px; }
.links a, .navright a { display: flex; align-items: center; gap: 8px; }
.navright { margin-left: auto; display: flex; align-items: center; gap: 32px; }
.navright .search { margin: 0 -8px; }
.search { width: 250px; height: 40px; display: flex; align-items: center; padding: 0 12px; border-radius: 4px; background: #4b4b7b; color: #b0b0d6; }
.search input { flex: 1; min-width: 0; border: 0; padding: 0; background: none; font: 17px/24px "Open Sans", "Noto Sans", sans-serif; color: #fff; }
.search input::placeholder { color: #a9a9cd; opacity: 1; }
.user { margin-left: -4px; }

.body { flex: 1; min-height: 0; display: flex; }

/* project sidebar */
.side { width: 276px; flex: none; display: flex; flex-direction: column; background: #fafafa; color: #707070; border-right: 1px solid #eee; }
.scroller { flex: 1; min-height: 0; display: flex; overflow: hidden; }
.menu { flex: 1; }
.context { display: flex; align-items: center; gap: 13px; height: 74px; padding-left: 14px; color: #2e2e2e; }
strong { font-weight: 600; }
.avatar { display: flex; align-items: center; justify-content: center; background: #f3e5f5; color: #555; border: 1px solid #eee4f0; border-radius: 4px; }
.avatar.small { width: 48px; height: 48px; font-size: 18px; }
.section { background: #f0f0f0; border-left: 5px solid #4b4ba3; padding-bottom: 9px; margin-bottom: 2px; }
.item { display: flex; align-items: center; gap: 11px; height: 56px; padding: 0 20px; }
.section .item { padding-left: 15px; color: #393982; font-weight: 500; }
.sub { display: flex; align-items: center; height: 46px; padding-left: 45px; }
.sub.on { height: 48px; background: #e7e7e7; color: #393982; font-weight: 500; }
.count { margin-left: auto; width: 22px; height: 25px; border-radius: 12px; background: #e6e6e6; font-size: 15px; text-align: center; }
.collapse { height: 59px; display: flex; align-items: center; gap: 11px; padding-left: 21px; border-top: 1px solid #e5e5e5; }

/* project page */
main { flex: 1; min-width: 0; padding: 0 20px; }
.content { max-width: 1198px; margin: 0 auto; }
.crumbs { display: flex; align-items: center; gap: 9px; height: 59px; padding-top: 2px; border-bottom: 1px solid #e5e5e5; font-size: 14px; color: #707070; }
.crumbs a { display: flex; align-items: center; gap: 6px; }
.crumbs strong { color: #2e2e2e; }
.home { display: flex; margin-top: 20px; }
.avatar.big { width: 80px; height: 80px; font-size: 36px; border-radius: 8px; }
.titles { margin-left: 18px; color: #707070; }
.titles h1 { display: flex; align-items: center; gap: 12px; padding-top: 10px; font-size: 25px; line-height: 32px; font-weight: 700; color: #2e2e2e; }
.titles p { display: flex; line-height: 24px; margin-top: 2px; }
.pid { border-right: 1px solid #707070; padding-right: 8px; margin-right: 10px; }
.titles a, .blue { color: #1b69b6; }
.actions { margin: 20px 0 0 auto; display: flex; align-items: flex-start; gap: 10px; }
.btn { height: 30px; display: flex; align-items: center; justify-content: center; border: 1px solid #e5e5e5; border-radius: 4px; background: #fff; color: #2e2e2e; font-size: 15px; white-space: nowrap; }
.btn svg { color: #707070; }
.bell { width: 69px; gap: 16px; }
.pair { display: flex; }
.pair .btn { width: 78px; gap: 8px; border-radius: 4px 0 0 4px; }
.pair.off .btn { width: 84px; background: #fafafa; color: #999; font-size: 17px; }
.num { width: 42px; height: 30px; border: 1px solid #e5e5e5; border-left: 0; border-radius: 0 4px 4px 0; background: #fafafa; text-align: center; line-height: 28px; }
.clone { width: 92px; gap: 12px; background: #1f78d1; border-color: #1b69b6; color: #fff; }
.clone svg { color: #fff; }
.stats { display: flex; gap: 19px; margin-top: 19px; color: #111; }
.stats a { display: flex; align-items: center; gap: 6px; }
.stats svg { color: #707070; }
.stats .blue, .stats .blue svg { color: #1b69b6; }
.desc { margin-top: 16px; font-size: 18px; }
.refs { display: flex; align-items: center; margin-top: 55px; height: 43px; }
.ref { display: grid; width: 200px; align-items: center; }
.ref select, .ref svg { grid-area: 1 / 1; }
.ref svg { justify-self: end; margin-right: 10px; color: #bbb; pointer-events: none; }
.ref select { appearance: none; width: 100%; height: 43px; border: 2px solid #111; border-radius: 4px; background: #fff; color: #2e2e2e; font: inherit; padding: 0 12px; }
.path { margin: 0 14px 0 19px; }
.slash { color: #8a8a8a; margin-right: 7px; }
.tall { height: 42px; font-size: 17px; padding: 0 12px; }
.add { width: 68px; gap: 12px; }
.tree { display: flex; gap: 5px; margin-left: auto; }
.find { gap: 9px; }
.dl { width: 76px; gap: 20px; }
.commit { display: flex; margin-top: 12px; height: 95px; padding: 20px; border: 1px solid #e5e5e5; border-radius: 4px; background: #fafafa; }
.ctext { display: flex; flex-direction: column; margin-left: 14px; line-height: 27px; }
.sha { margin-left: auto; display: flex; height: 44px; border: 1px solid #e5e5e5; border-radius: 4px; }
.sha span { padding: 0 12px; font: 16px/44px "Liberation Mono", monospace; }
.sha button { width: 45px; display: flex; align-items: center; justify-content: center; border-left: 1px solid #e5e5e5; border-radius: 0 4px 4px 0; background: #fff; color: #707070; }
.suggest { display: flex; gap: 20px; margin-top: 40px; color: #707070; }
.suggest a { display: flex; align-items: center; gap: 6px; height: 42px; padding: 0 12px 0 15px; border: 1px dashed #b5b5b5; border-radius: 4px; }
.files { margin-top: 20px; border: 1px solid #e5e5e5; border-radius: 4px; overflow: hidden; }
table { width: 100%; border-collapse: collapse; }
th, td { height: 53px; padding: 0 21px; text-align: left; font-weight: 400; }
th { height: 52px; background: #fafafa; border-bottom: 1px solid #e5e5e5; }
.name { width: 311px; }
.end { text-align: right; padding-right: 20px; }
.dim { color: #707070; }
.folder { display: flex; align-items: center; gap: 7px; padding-left: 2px; }

/* browser side rail */
.edge { width: 58px; flex: none; display: flex; flex-direction: column; align-items: center; padding-bottom: 2px; background: #f7f7f7; border-left: 1px solid #b9b9b9; }
.edge button { height: 53px; flex: none; display: flex; align-items: center; justify-content: center; }
.edge .more { height: 58px; }
.edge hr { width: 35px; margin: auto 0 3px; border: 0; border-top: 1px solid #bbb; }

/* taskbar */
.taskbar { height: 59px; flex: none; display: grid; grid-template-columns: 1fr auto 1fr; align-items: center; padding: 0 24px 2px 25px; background: #e2d9d8; font-size: 15px; line-height: 20px; color: #1a1a1a; }
.weather { display: flex; align-items: center; gap: 10px; font-size: 14px; }
.soft { color: #555; }
.apps { display: flex; align-items: center; gap: 7px; }
.apps button { width: 48px; height: 48px; display: flex; flex-direction: column; align-items: center; justify-content: center; }
.apps .tsearch { flex-direction: row; gap: 7px; width: 123px; height: 38px; margin: 0 2px; border-radius: 19px; background: #f7f3f2; }
.apps .run { position: relative; }
.run::after { content: ""; position: absolute; bottom: 0; width: 8px; height: 4px; border-radius: 2px; background: #857d7d; }
.apps .now { background: #f3ecea; border-radius: 5px; }
.now::after { width: 20px; background: #0078d4; }
.glyph { font: 700 13px "Open Sans", sans-serif; fill: #fff; }
.tray { display: flex; align-items: center; justify-content: flex-end; line-height: 20px; }
.lang { margin: 0 22px 0 19px; text-align: center; }
.status { display: flex; align-items: center; gap: 10px; margin-right: 17px; }
.clock { text-align: right; }
.badge { width: 20px; height: 20px; margin-left: 10px; border-radius: 50%; background: #0067c0; color: #fff; font-size: 13px; text-align: center; }
```
